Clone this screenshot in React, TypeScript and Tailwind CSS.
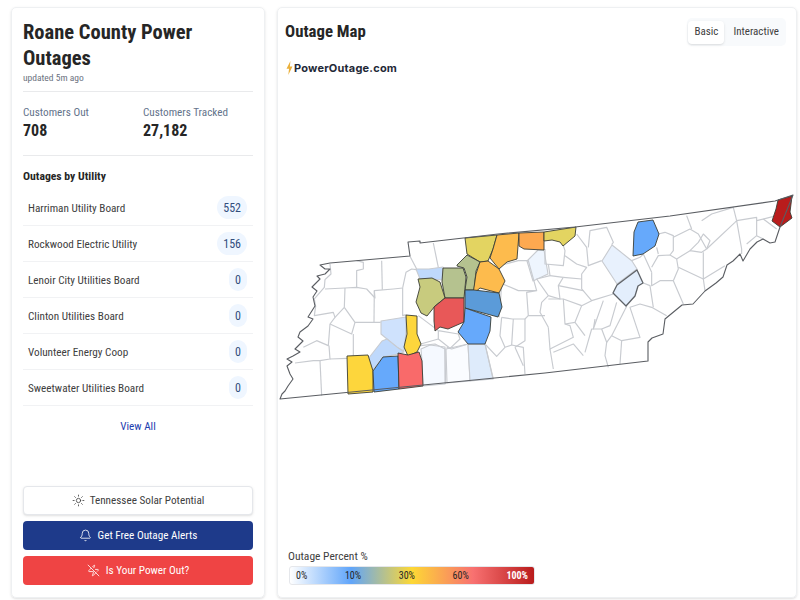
import { Bell, Sun, ZapOff } from "lucide-react";

const utilities: [string, string][] = [
  ["Harriman Utility Board", "552"],
  ["Rockwood Electric Utility", "156"],
  ["Lenoir City Utilities Board", "0"],
  ["Clinton Utilities Board", "0"],
  ["Volunteer Energy Coop", "0"],
  ["Sweetwater Utilities Board", "0"],
];

const outline =
  "280,400 545,374 648,362 648,343 652,339 663,335 665,320 682,306 693,305 705,292 716,284 723,278 727,266 733,262 740,255 743,262 750,250 757,243 763,240 770,244 775,243 780,228 793,196 775,202 670,217 575,228 498,235 420,244 420,242 408,243 410,257 330,264 320,266 325,270 330,270 325,275 317,277 320,280 315,285 312,288 317,292 313,298 315,307 308,318 313,320 308,327 300,333 298,338 303,342 295,350 300,353 293,357 287,360 292,363 287,367 290,375 293,380 288,387 285,392 282,395 280,400";

const westLines = [
  "165,135 168,165 150,182 148,205 118,240 122,262 118,290 175,280 180,295 165,315 160,380 125,365 85,385",
  "150,210 210,207 245,205 275,210 300,237 298,215 355,210 383,207",
  "245,205 245,155 265,150 265,130 245,125",
  "320,125 322,212",
  "210,207 208,265 180,295",
  "208,265 240,310 262,310 317,310",
  "165,315 230,345 240,310",
  "235,345 235,410",
  "162,380 165,420 135,425 115,425 60,432",
  "135,425 140,530",
  "165,420 217,418",
  "383,207 393,160 410,150 423,152",
  "383,207 383,290 393,287",
  "405,112 425,150",
  "475,72 490,145",
  "298,215 297,310",
  "437,380 480,375 510,390 512,495",
  "515,385 530,390 580,375",
  "630,375 655,480",
  "630,375 665,412 690,385 710,378 745,385 750,465",
  "720,385 745,440",
  "680,295 675,350 690,385",
  "680,295 712,300 750,300 750,365 720,385",
  "715,300 710,378",
  "750,300 760,290 810,290",
  "490,335 490,360 525,388 555,360 550,345 490,335",
  "430,290 490,335",
  "437,375 490,360",
  "672,190 730,215 785,215 755,220 760,290",
  "672,140 730,125 760,125 785,215",
  "680,195 675,270 672,295",
];

const eastLines = [
  "45,210 45,255 100,260 105,215 100,200",
  "105,230 140,255 170,265 155,285 155,330 185,365 250,345",
  "140,165 170,205 175,260 215,245",
  "175,205 180,155 230,145 250,190 245,197",
  "55,255 60,290 20,300 55,350 35,370 30,400 55,445",
  "60,290 100,295 85,320 90,360 55,350",
  "100,295 155,300",
  "85,320 160,335",
  "55,360 100,360 105,435 135,430 155,380 185,365",
  "100,360 155,380",
  "135,430 165,470",
  "55,445 60,510 130,475 120,440 105,435",
  "60,510 70,570",
  "160,530 130,495 70,520",
  "165,520 185,450 215,450 230,490 225,530 235,565",
  "275,485 270,555",
  "230,490 245,470 275,485 330,475 300,385 330,375 365,385 410,410",
  "290,382 245,470",
  "260,370 240,440 215,450",
  "220,365 190,450 195,420",
  "305,245 330,235 340,225 365,280",
  "340,312 360,320 370,385",
  "365,280 365,320 390,305 430,305 460,375",
  "430,305 445,270 440,240 420,228 385,230 365,265",
  "385,165 405,160 430,170 430,215 420,228",
  "380,205 385,225",
  "430,175 480,150 505,165 530,210",
  "480,215 505,190 520,165 540,185 530,210",
  "440,240 480,215 515,220 530,210",
  "445,265 520,300 525,335",
  "520,220 520,300 585,260",
  "530,210 615,130 620,125 635,210 635,225",
  "470,110 485,150",
  "515,125 545,105 610,85 620,125",
  "620,125 680,115 680,170",
  "680,125 740,110",
  "740,150 700,120",
  "650,195 680,170 700,180",
];

const lightFills: [string, string][] = [
  ["421,350 430,346 445,348 445,385 423,387 422,362", "#f5f9ff"],
  ["446,350 468,345 470,382 447,384", "#fafcff"],
  ["468,345 485,345 493,380 470,382", "#deebfb"],
  ["538,251 544,251 548,275 533,282 527,262", "#eef5fe"],
  ["612,246 632,262 637,270 617,285 602,262", "#e8f1fd"],
  ["381,322 406,318 406,333 404,352 396,348 387,340 381,335", "#cfe2fd"],
  ["368,360 382,342 387,340 397,348 404,353 398,355 383,358 373,371", "#bfd9fc"],
  ["416,270 429,270 443,268 442,281 432,280 420,280", "#bfd9fc"],
];

const darkFills: [string, string][] = [
  ["465,239 497,236 493,250 488,262 480,263 467,255", "#e3d461"],
  ["497,236 519,234 517,260 507,263 499,270 490,259 493,250", "#fdbb4d"],
  ["519,234 544,233 544,251 524,250 519,247", "#fda950"],
  ["544,233 576,228 575,237 563,247 560,243 552,241 544,242", "#e3d461"],
  ["457,266 467,256 480,263 476,272 474,291 465,291 467,278 464,269 457,267", "#b5c28f"],
  ["480,263 488,262 499,270 505,282 499,294 480,289 473,295 476,275", "#fdbb4d"],
  ["443,269 463,269 466,278 464,299 445,299 442,283", "#b5c28f"],
  ["418,280 432,279 440,283 445,299 435,307 427,317 421,314 416,303 420,288", "#c8cb7e"],
  ["434,308 445,299 464,299 464,323 448,330 440,328 435,332 434,322", "#e85858"],
  ["465,291 474,291 499,294 502,308 498,318 465,309", "#5b9bd9"],
  ["465,309 491,318 490,332 485,345 468,345 458,333 464,323", "#66a9fb"],
  ["406,316 417,317 417,335 421,345 417,353 408,357 404,348 407,335", "#fdd63c"],
  ["347,357 368,356 373,372 373,393 348,395", "#fdd63c"],
  ["373,372 383,358 398,357 399,390 374,393", "#66a9fb"],
  ["398,354 408,356 419,353 422,362 423,387 399,390", "#f96a6a"],
  ["638,223 653,221 659,235 655,247 643,255 633,257 634,233", "#66a9fb"],
  ["792,197 790,213 792,219 780,228 772,222 776,210 778,201", "#b91c1c"],
];

function TennesseeMap() {
  return (
    <svg viewBox="278 190 518 220" className="block h-[220px] w-[518px]" fill="none">
      <polygon points={outline} fill="#ffffff" />
      {lightFills.map(([p, c]) => (
        <polygon key={p} points={p} fill={c} stroke="#c8cbd0" strokeWidth="1.1" strokeLinejoin="round" />
      ))}
      <g transform="translate(275 220) scale(0.3333)" stroke="#c8cbd0" strokeWidth="3.5" strokeLinejoin="round">
        {westLines.map((p) => (
          <polyline key={p} points={p} />
        ))}
      </g>
      <g transform="translate(530 180) scale(0.3333)" stroke="#c8cbd0" strokeWidth="3.5" strokeLinejoin="round">
        {eastLines.map((p) => (
          <polyline key={p} points={p} />
        ))}
      </g>
      <polygon
        points="637,271 643,284 638,287 635,297 626,307 620,301 613,294 617,286"
        fill="#e3eefc"
        stroke="#5f6368"
        strokeWidth="1.3"
        strokeLinejoin="round"
      />
      {darkFills.map(([p, c]) => (
        <polygon key={p} points={p} fill={c} stroke="#3a3d36" strokeWidth="0.9" strokeLinejoin="round" />
      ))}
      <polygon points={outline} stroke="#5a5d62" strokeWidth="1.1" strokeLinejoin="round" />
    </svg>
  );
}

export default function App() {
  return (
    <div
      className="flex h-[600px] w-[800px] gap-[12px] bg-white pl-[11px] pr-[3px] pt-[7px] pb-[2px] font-stretch-[87.5%] text-[#262626]"
      style={{ fontFamily: 'Roboto, "Liberation Sans", Arial, sans-serif' }}
    >
      <div className="flex w-[254px] flex-col rounded-[5px] border border-[#eef0f2] px-[11px] pb-[12px] pt-[11px] shadow-sm">
        <h1 className="text-[20.5px] font-bold leading-[26px] text-[#262626]">Roane County Power Outages</h1>
        <div className="mt-[1px] text-[9.5px] leading-[12px] text-[#6b7280]">updated 5m ago</div>
        <div className="mt-[7px] border-t border-[#e9eaec]" />
        <div className="mt-[14px] grid grid-cols-[120px_1fr]">
          <div>
            <div className="text-[11.2px] leading-[14px] text-[#64748b]">Customers Out</div>
            <div className="mt-[1px] text-[16px] font-bold leading-[20px] text-[#262626]">708</div>
          </div>
          <div>
            <div className="text-[11.2px] leading-[14px] text-[#64748b]">Customers Tracked</div>
            <div className="mt-[1px] text-[16px] font-bold leading-[20px] text-[#262626]">27,182</div>
          </div>
        </div>
        <div className="mt-[14px] border-t border-[#e9eaec]" />
        <div className="mt-[14px] text-[11.7px] font-bold leading-[13px] text-[#262626]">Outages by Utility</div>
        <div className="mt-[7px]">
          {utilities.map(([name, n]) => (
            <div key={name} className="flex h-[36px] items-center justify-between border-b border-[#f1f2f4] pl-[5px] pr-[6px]">
              <span className="pt-[3px] text-[11.2px] text-[#404040]">{name}</span>
              <span className="flex h-[23px] min-w-[18px] items-center justify-center rounded-full bg-[#eff6ff] px-[6px] pt-[1px] text-[12px] text-[#334e7d]">
                {n}
              </span>
            </div>
          ))}
        </div>
        <div className="mt-[14px] text-center text-[11.2px] leading-[14px] text-[#1e40af]">View All</div>
        <div className="mt-auto flex flex-col gap-[6px]">
          <div className="flex h-[29px] items-center justify-center gap-[5px] rounded-[4px] border border-[#e5e7eb] bg-white text-[11.2px] text-[#404040] shadow-sm">
            <Sun size={13} strokeWidth={1.5} />
            <span className="pt-[1px]">Tennessee Solar Potential</span>
          </div>
          <div className="flex h-[29px] items-center justify-center gap-[6px] rounded-[4px] bg-[#1e3a8a] text-[11.2px] text-white">
            <Bell size={13} strokeWidth={1.5} />
            <span className="pt-[1px]">Get Free Outage Alerts</span>
          </div>
          <div className="flex h-[29px] items-center justify-center gap-[6px] rounded-[4px] bg-[#ef4444] text-[11.2px] text-white">
            <ZapOff size={13} strokeWidth={1.5} />
            <span className="pt-[1px]">Is Your Power Out?</span>
          </div>
        </div>
      </div>

      <div className="flex w-[520px] flex-col rounded-[5px] border border-[#eef0f2] shadow-sm">
        <div className="flex items-center justify-between pl-[7px] pr-[10px] pt-[10px]">
          <h2 className="text-[16.8px] font-bold text-[#262626]">Outage Map</h2>
          <div className="flex h-[28px] items-center rounded-[5px] bg-[#f8fafc] py-[3px] pl-[1px] pr-[7px] text-[11px] text-[#404040]">
            <div className="flex h-[23px] w-[36px] items-center justify-center rounded-[4px] bg-white shadow-sm">Basic</div>
            <div className="pl-[9px]">Interactive</div>
          </div>
        </div>
        <div className="ml-[8px] mt-[14px] flex items-center gap-[1px]">
          <svg width="7" height="14" viewBox="0 0 7 15">
            <path d="M4.5 0 L0.3 8.2 H3 L2.2 15 L6.7 6 H3.9 Z" fill="#eab03a" />
          </svg>
          <span className="text-[11px] font-bold tracking-[0.2px] text-[#1f2937]" style={{ fontFamily: "Inter, sans-serif" }}>
            PowerOutage.com
          </span>
        </div>
        <div className="mt-[112px]">
          <TennesseeMap />
        </div>
        <div className="ml-[10px] mt-auto pb-[12px]">
          <div className="text-[11.5px] leading-[14px] text-[#404040]">Outage Percent %</div>
          <div className="mt-[3px] ml-[1px] flex h-[19px] w-[246px] items-center justify-between rounded-[3px] border border-[#e5e7eb] bg-[linear-gradient(to_right,#ffffff_0%,#60a5fa_25%,#fdd835_50%,#f87171_75%,#b91c1c_100%)] pl-[6px] pr-[6px] text-[10px] text-[#262626]">
            <span>0%</span>
            <span>10%</span>
            <span>30%</span>
            <span>60%</span>
            <span className="font-bold text-white">100%</span>
          </div>
        </div>
      </div>
    </div>
  );
}
